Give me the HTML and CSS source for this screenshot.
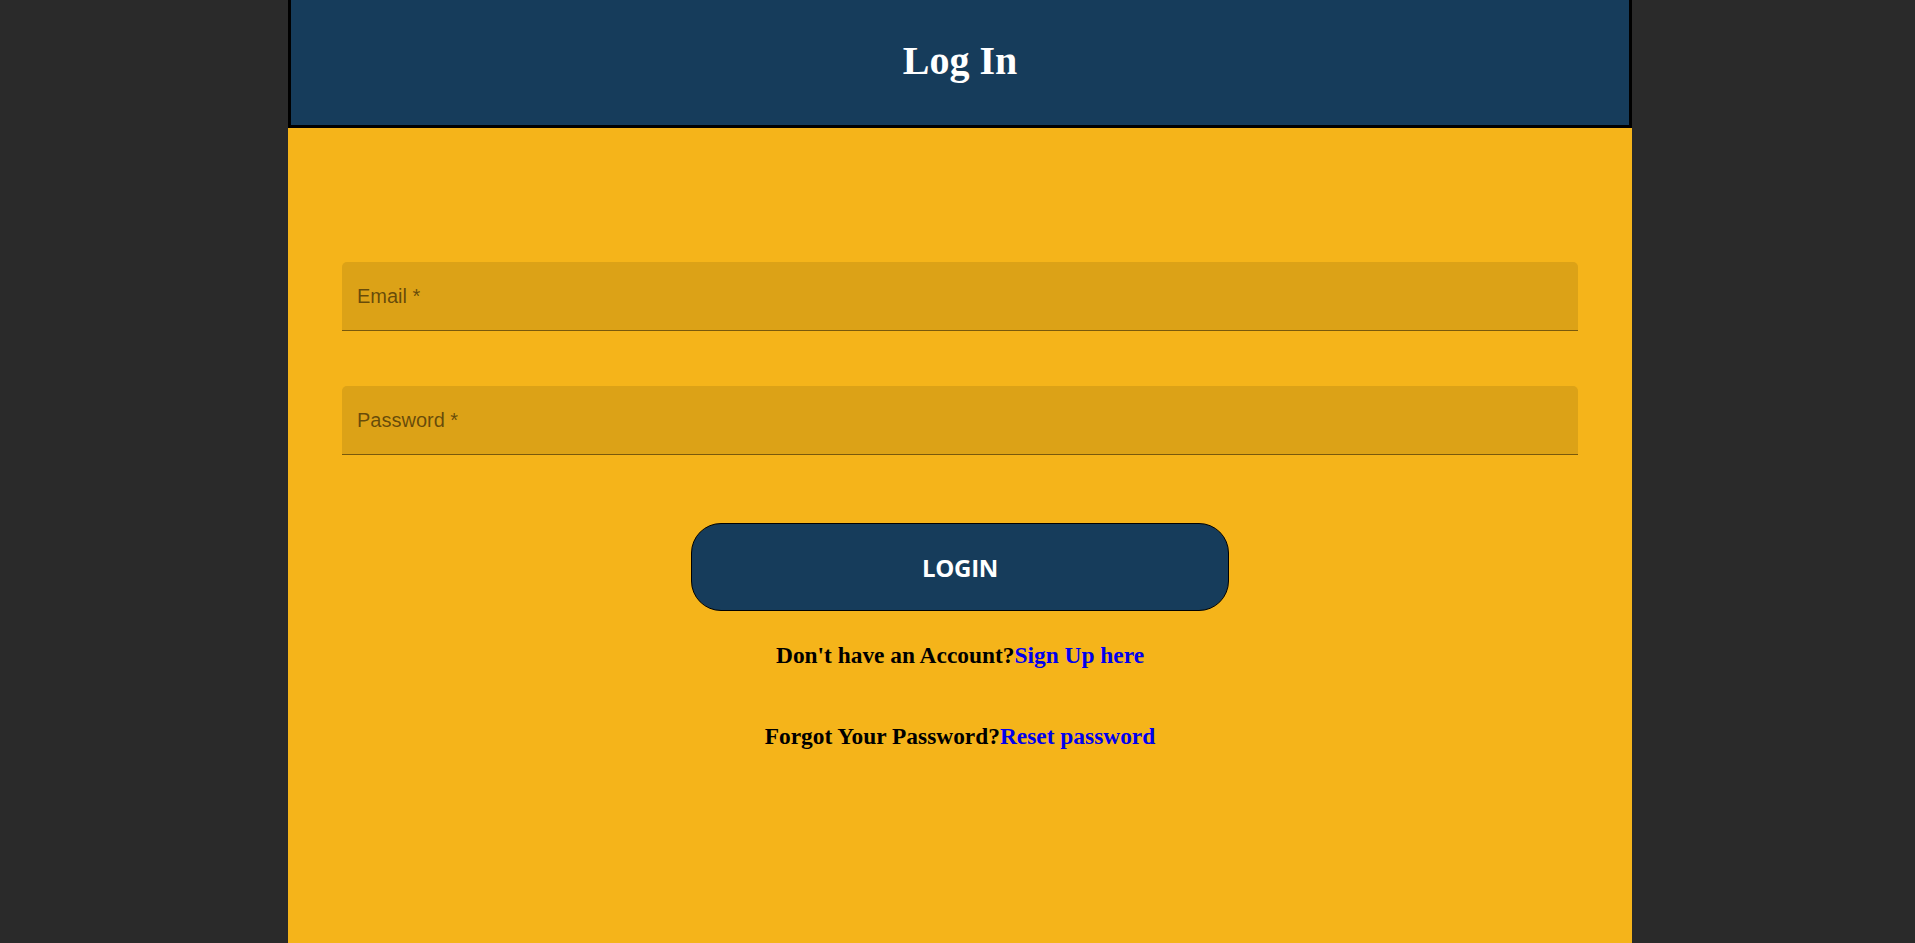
FILE: index.html
```html
<!DOCTYPE html>
<html lang="en">
<head>
<meta charset="utf-8">
<title>Log In</title>
<link rel="stylesheet" href="styles.css">
</head>
<body>
<div class="page">
  <main class="panel">
    <header class="header">
      <h1 class="title">Log In</h1>
    </header>
    <form class="form">
      <input class="field" type="email" placeholder="Email *">
      <input class="field field-second" type="password" placeholder="Password *">
      <button class="login-btn" type="button">Login</button>
      <h3 class="note note-first">Don't have an Account?<a class="link" href="#">Sign Up here</a></h3>
      <h3 class="note note-second">Forgot Your Password?<a class="link" href="#">Reset password</a></h3>
    </form>
  </main>
</div>
</body>
</html>
```
FILE: styles.css
```css
html, body {
  margin: 0;
  padding: 0;
  height: 100%;
}
body {
  background: #2a2a2a;
  font-family: "Liberation Serif", "Times New Roman", serif;
  overflow: hidden;
}
.page {
  display: flex;
  justify-content: center;
  padding-left: 5px;
  min-height: 100vh;
}
.panel {
  width: 1344px;
  min-height: 100vh;
  background: #f5b41a;
  display: flex;
  flex-direction: column;
}
.header {
  background: #163c5b;
  border: 3px solid #000;
  border-top: none;
  height: 125px;
  box-sizing: content-box;
  display: flex;
  justify-content: center;
}
.title {
  margin: 0;
  padding-top: 38px;
  font-size: 40px;
  line-height: 46px;
  font-weight: bold;
  color: #fff;
}
.form {
  display: flex;
  flex-direction: column;
  align-items: center;
  padding: 134px 54px 0;
}
.field {
  width: 100%;
  height: 69px;
  box-sizing: border-box;
  border: none;
  border-bottom: 1px solid rgba(0, 0, 0, 0.45);
  border-radius: 5px 5px 0 0;
  background: #dca217;
  padding: 0 15px;
  font-family: "Liberation Sans", Arial, sans-serif;
  font-size: 20px;
  color: #000;
  outline: none;
}
.field::placeholder {
  color: rgba(0, 0, 0, 0.55);
  opacity: 1;
}
.field-second {
  margin-top: 55px;
}
.login-btn {
  margin-top: 68px;
  width: 538px;
  height: 88px;
  box-sizing: border-box;
  border: 1px solid #000;
  border-radius: 30px;
  background: #163c5b;
  color: #fff;
  font-family: "Open Sans", "Noto Sans", sans-serif;
  font-weight: bold;
  font-size: 24px;
  text-transform: uppercase;
  letter-spacing: -0.3px;
  cursor: pointer;
}
.note {
  margin: 0;
  font-size: 23.4px;
  line-height: 27px;
  font-weight: bold;
  color: #000;
  text-align: center;
}
.note-first {
  margin-top: 31px;
}
.note-second {
  margin-top: 54px;
}
.link {
  color: #0000ee;
  text-decoration: none;
}
```
